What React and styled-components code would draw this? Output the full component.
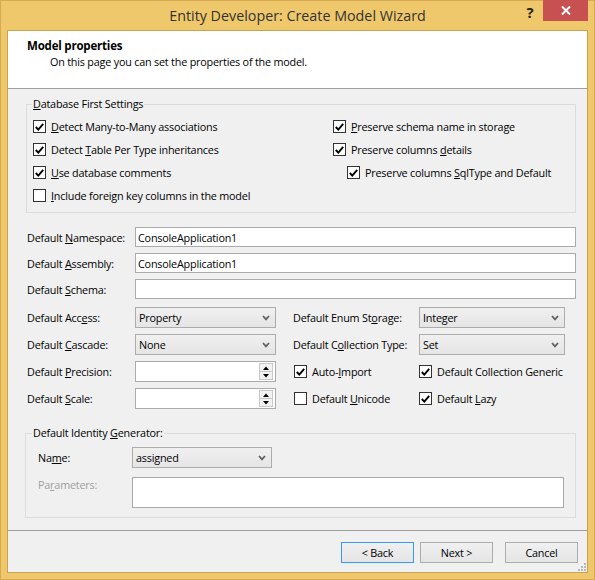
import React from "react";
import styled, { createGlobalStyle } from "styled-components";

const Global = createGlobalStyle`
  html, body { margin: 0; padding: 0; background: #fff; }
  * { box-sizing: border-box; }
  body {
    font-family: "Open Sans", "Noto Sans", sans-serif;
    font-size: 10.8px;
    letter-spacing: -0.2px;
    color: #000;
  }
`;

const Window = styled.div`
  width: 595px;
  height: 580px;
  background: #f0c86c;
  border: 1px solid #d6aa52;
  display: flex;
  flex-direction: column;
`;

const TitleBar = styled.div`
  height: 29px;
  position: relative;
  display: flex;
  align-items: center;
  justify-content: center;
  font-size: 14.3px;
  letter-spacing: 0;
  color: #333;
  padding-bottom: 1px;
`;

const Caption = styled.div`
  position: absolute;
  top: -1px;
  right: 6px;
  display: flex;
  align-items: flex-start;
`;

const HelpBtn = styled.div`
  width: 26px;
  height: 21px;
  display: flex;
  align-items: center;
  justify-content: center;
  font-weight: 700;
  font-size: 15px;
  color: #222;
  padding-top: 3px;
`;

const CloseBtn = styled.div`
  width: 45px;
  height: 21px;
  background: #c75050;
  display: flex;
  align-items: center;
  justify-content: center;
`;

const Frame = styled.div`
  flex: 1;
  margin: 0 6px 6px 6px;
  border: 1px solid #c9a154;
  background: #f0f0f0;
  display: flex;
  flex-direction: column;
  min-height: 0;
`;

const Header = styled.div`
  height: 58px;
  background: #fff;
  border-bottom: 1px solid #a0a0a0;
  padding: 7px 0 0 19px;
  line-height: 15px;
`;

const HeaderTitle = styled.div`
  font-weight: 700;
  font-size: 11.5px;
`;

const HeaderSub = styled.div`
  margin-top: 1px;
  padding-left: 23px;
`;

const Body = styled.div`
  flex: 1;
  padding: 8px 11px 0 18px;
  display: flex;
  flex-direction: column;
`;

const Group = styled.fieldset`
  margin: ${(p) => p.$top || 0}px 0 0 ${(p) => p.$shift || 0}px;
  border: 1px solid #dcdcdc;
  padding: 0;
  min-width: 0;
`;

const Legend = styled.legend`
  margin-left: ${(p) => p.$offset}px;
  padding: 0 1px;
  line-height: 14px;
`;

const CheckGrid = styled.div`
  display: grid;
  grid-template-columns: 300px 1fr;
  padding: 4px 6px 5px 6px;
`;

const CheckCol = styled.div`
  display: flex;
  flex-direction: column;
`;

const CheckRow = styled.label`
  display: flex;
  align-items: center;
  gap: 5px;
  height: ${(p) => p.$h || 23}px;
  padding-left: ${(p) => p.$indent || 0}px;
  white-space: nowrap;
`;

const Box = styled.span`
  width: 13px;
  height: 13px;
  border: 1px solid #333;
  background: #fff;
  display: flex;
  align-items: center;
  justify-content: center;
  flex: none;
`;

const Key = styled.span`
  text-decoration: underline;
  text-underline-offset: 1px;
`;

const TextRows = styled.div`
  margin-top: 14px;
  padding-left: 1px;
  display: grid;
  grid-template-columns: 108px 1fr;
  grid-auto-rows: 20px;
  row-gap: 6px;
  align-items: center;
`;

const FieldLabel = styled.div`
  white-space: nowrap;
  color: ${(p) => (p.$disabled ? "#a0a0a0" : "#000")};
  align-self: ${(p) => (p.$top ? "start" : "center")};
  line-height: 15px;
`;

const TextBox = styled.div`
  grid-column: ${(p) => p.$span || "auto"};
  height: ${(p) => p.$h || 20}px;
  background: #fff;
  border: 1px solid #ababab;
  padding-left: 2px;
  display: flex;
  align-items: center;
  white-space: nowrap;
`;

const LowerGrid = styled.div`
  margin-top: 8px;
  padding-left: 1px;
  display: grid;
  grid-template-columns: 108px 141px 17px 126px 146px;
  grid-auto-rows: 21px;
  row-gap: 6px;
  align-items: center;
`;

const Cell = styled.div`
  grid-column: ${(p) => p.$col};
  padding-left: ${(p) => p.$pl || 0}px;
`;

const Select = styled.div`
  height: 21px;
  border: 1px solid #acacac;
  background: linear-gradient(#f0f0f0, #e5e5e5);
  display: flex;
  align-items: center;
  justify-content: space-between;
  padding: 0 5px 0 3px;
  white-space: nowrap;
`;

const Spin = styled.div`
  height: 21px;
  border: 1px solid #ababab;
  background: #fff;
  display: flex;
  justify-content: flex-end;
  padding: 1px 2px 1px 0;
`;

const SpinCol = styled.div`
  width: 14px;
  display: flex;
  flex-direction: column;
`;

const SpinHalf = styled.div`
  flex: 1;
  border: 1px solid #c8c8c8;
  margin-top: ${(p) => (p.$down ? "-1px" : "0")};
  background: #f2f2f2;
  display: flex;
  align-items: center;
  justify-content: center;
`;

const IdGroupBody = styled.div`
  display: grid;
  grid-template-columns: 94px 140px 1fr;
  row-gap: 9px;
  padding: 7px 11px 9px 12px;
  align-items: center;
`;

const Footer = styled.div`
  height: 42px;
  border-top: 1px solid #a0a0a0;
  display: flex;
  justify-content: flex-end;
  align-items: flex-start;
  padding: 11px 9px 0 0;
  gap: 6px;
  position: relative;
`;

const Button = styled.div`
  width: 73px;
  height: 21px;
  border: 1px solid ${(p) => (p.$focus ? "#3399ff" : "#acacac")};
  background: linear-gradient(#f0f0f0, #e5e5e5);
  display: flex;
  align-items: center;
  justify-content: center;
  margin-left: ${(p) => p.$gapLeft || 0}px;
`;

const Grip = styled.svg`
  position: absolute;
  right: 1px;
  bottom: 1px;
`;

const Check = ({ on }) => (
  <Box>
    {on && (
      <svg width="9" height="8" viewBox="0 0 9 8">
        <path d="M0.8 4 L3.3 6.6 L8.2 0.9" fill="none" stroke="#000" strokeWidth="1.9" />
      </svg>
    )}
  </Box>
);

const Chevron = () => (
  <svg width="8" height="6" viewBox="0 0 8 6">
    <path d="M1 1 L4 4.3 L7 1" fill="none" stroke="#606060" strokeWidth="1.8" />
  </svg>
);

const CB = ({ on, children, indent, h }) => (
  <CheckRow $indent={indent} $h={h}>
    <Check on={on} />
    <span>{children}</span>
  </CheckRow>
);

const Spinner = () => (
  <Spin>
    <SpinCol>
      <SpinHalf>
        <svg width="6" height="4" viewBox="0 0 6 4"><path d="M0 4 L3 0.5 L6 4 Z" fill="#000" /></svg>
      </SpinHalf>
      <SpinHalf $down>
        <svg width="6" height="4" viewBox="0 0 6 4"><path d="M0 0 L3 3.5 L6 0 Z" fill="#000" /></svg>
      </SpinHalf>
    </SpinCol>
  </Spin>
);

export default function App() {
  return (
    <>
      <Global />
      <Window>
        <TitleBar>
          Entity Developer: Create Model Wizard
          <Caption>
            <HelpBtn>?</HelpBtn>
            <CloseBtn>
              <svg width="10" height="9" viewBox="0 0 10 9">
                <path d="M1 0.5 L9 8.5 M9 0.5 L1 8.5" stroke="#fff" strokeWidth="2" />
              </svg>
            </CloseBtn>
          </Caption>
        </TitleBar>
        <Frame>
          <Header>
            <HeaderTitle>Model properties</HeaderTitle>
            <HeaderSub>On this page you can set the properties of the model.</HeaderSub>
          </Header>
          <Body>
            <Group>
              <Legend $offset={5}>
                <Key>D</Key>atabase First Settings
              </Legend>
              <CheckGrid>
                <CheckCol>
                  <CB on><Key>D</Key>etect Many-to-Many associations</CB>
                  <CB on>Detect <Key>T</Key>able Per Type inheritances</CB>
                  <CB on><Key>U</Key>se database comments</CB>
                  <CB><Key>I</Key>nclude foreign key columns in the model</CB>
                </CheckCol>
                <CheckCol>
                  <CB on><Key>P</Key>reserve schema name in storage</CB>
                  <CB on>Preserve columns <Key>d</Key>etails</CB>
                  <CB on indent={14}>Preserve columns <Key>S</Key>qlType and Default</CB>
                </CheckCol>
              </CheckGrid>
            </Group>

            <TextRows>
              <FieldLabel>Default <Key>N</Key>amespace:</FieldLabel>
              <TextBox>ConsoleApplication1</TextBox>
              <FieldLabel>Default <Key>A</Key>ssembly:</FieldLabel>
              <TextBox>ConsoleApplication1</TextBox>
              <FieldLabel>Default <Key>S</Key>chema:</FieldLabel>
              <TextBox />
            </TextRows>

            <LowerGrid>
              <Cell $col="1"><FieldLabel>Default Acc<Key>e</Key>ss:</FieldLabel></Cell>
              <Cell $col="2"><Select>Property<Chevron /></Select></Cell>
              <Cell $col="4"><FieldLabel>Default Enum St<Key>o</Key>rage:</FieldLabel></Cell>
              <Cell $col="5"><Select>Integer<Chevron /></Select></Cell>

              <Cell $col="1"><FieldLabel>Default <Key>C</Key>ascade:</FieldLabel></Cell>
              <Cell $col="2"><Select>None<Chevron /></Select></Cell>
              <Cell $col="4"><FieldLabel>Default C<Key>o</Key>llection Type:</FieldLabel></Cell>
              <Cell $col="5"><Select>Set<Chevron /></Select></Cell>

              <Cell $col="1"><FieldLabel>Default <Key>P</Key>recision:</FieldLabel></Cell>
              <Cell $col="2"><Spinner /></Cell>
              <Cell $col="4" $pl={1}><CB on h={21}>Auto-<Key>I</Key>mport</CB></Cell>
              <Cell $col="5"><CB on h={21}>Default Collection Generic</CB></Cell>

              <Cell $col="1"><FieldLabel>Default <Key>S</Key>cale:</FieldLabel></Cell>
              <Cell $col="2"><Spinner /></Cell>
              <Cell $col="4" $pl={1}><CB h={21}>Default <Key>U</Key>nicode</CB></Cell>
              <Cell $col="5"><CB on h={21}>Default <Key>L</Key>azy</CB></Cell>
            </LowerGrid>

            <Group $shift={-1} $top={17}>
              <Legend $offset={6}>
                Default Identity <Key>G</Key>enerator:
              </Legend>
              <IdGroupBody>
                <FieldLabel>Na<Key>m</Key>e:</FieldLabel>
                <Select>assigned<Chevron /></Select>
                <span />
                <FieldLabel $disabled $top>Pa<Key>r</Key>ameters:</FieldLabel>
                <TextBox $h={31} $span="2 / 4" />
              </IdGroupBody>
            </Group>
          </Body>
          <Footer>
            <Button $focus>&lt; Back</Button>
            <Button>Next &gt;</Button>
            <Button $gapLeft={6}>Cancel</Button>
            <Grip width="8" height="8" viewBox="0 0 8 8">
              <g fill="#b8b8b8">
                <rect x="6" y="0" width="2" height="2" />
                <rect x="3" y="3" width="2" height="2" />
                <rect x="6" y="3" width="2" height="2" />
                <rect x="0" y="6" width="2" height="2" />
                <rect x="3" y="6" width="2" height="2" />
                <rect x="6" y="6" width="2" height="2" />
              </g>
            </Grip>
          </Footer>
        </Frame>
      </Window>
    </>
  );
}
